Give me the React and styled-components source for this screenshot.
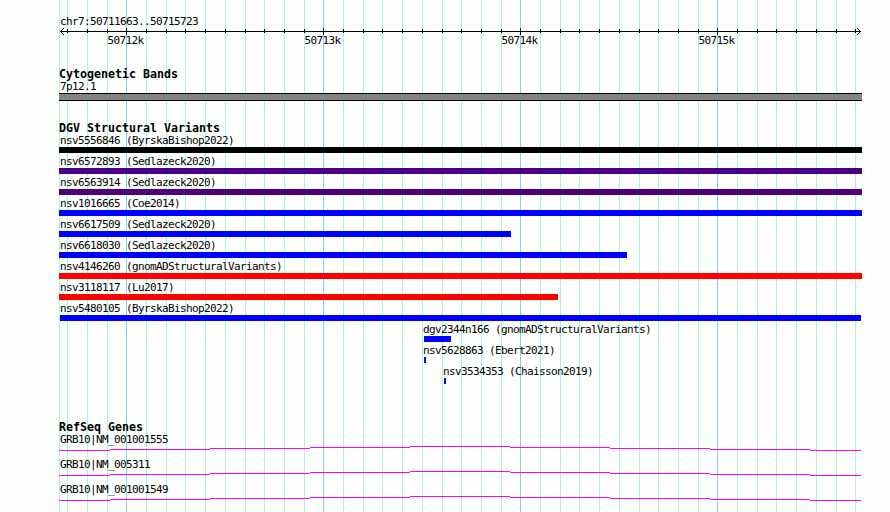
import React from "react";
import styled, { createGlobalStyle } from "styled-components";

const GlobalStyle = createGlobalStyle`
    body {
        margin: 0;
        background: #fdfffc;
        overflow: hidden;
    }
`;

const Browser = styled.div`
    display: grid;
    width: 890px;
    height: 512px;
    overflow: hidden;
    background: #fdfffc;
    color: #000;
    font-family: "DejaVu Sans Mono", "Liberation Mono", monospace;
`;

const GridLines = styled.svg`
    grid-area: 1 / 1;
    display: block;
`;

const Tracks = styled.main`
    grid-area: 1 / 1;
    display: flex;
    flex-direction: column;
    width: 803px;
    padding: 15px 0 0 59px;
`;

const Section = styled.section`
    display: flex;
    flex-direction: column;
    margin-top: ${(props) => props.$gap}px;
`;

const Title = styled.h2`
    margin: 0;
    height: 13px;
    line-height: 14px;
    font-size: 11.63px;
    font-weight: bold;
    white-space: pre;
`;

const Label = styled.div`
    height: 13px;
    line-height: 13px;
    padding-left: 1px;
    font-size: 11px;
    letter-spacing: -0.622px;
    white-space: pre;
`;

const Ruler = styled.svg`
    display: block;
    width: 803px;
    height: 19px;
    overflow: visible;
`;

const RulerText = styled.text`
    font-size: 11px;
    letter-spacing: -0.622px;
`;

const Band = styled.div`
    box-sizing: border-box;
    height: 8px;
    border: solid #000;
    border-width: 1px 0;
    background: #848284;
`;

const Variant = styled.div`
    height: 21px;
    margin-left: ${(props) => props.$offset}px;
`;

const Bar = styled.div`
    width: ${(props) => props.$width}px;
    height: 6px;
    margin-left: ${(props) => props.$start}px;
    background: ${(props) => props.$color};
`;

const Gene = styled.div`
    height: 25px;
`;

const Intron = styled.svg`
    display: block;
    width: 803px;
    height: 5px;
`;

const majorLines = [126, 323, 520, 717];

const minorLines = [
    59, 67, 87, 107, 146, 166, 185, 205, 225, 245, 264, 284, 304,
    343, 363, 382, 402, 422, 442, 461, 481, 501,
    540, 560, 579, 599, 619, 639, 658, 678, 698,
    737, 757, 776, 796, 816, 836, 855,
];

const rulerLabels = [
    { x: 48.6, text: "50712k" },
    { x: 245.6, text: "50713k" },
    { x: 442.6, text: "50714k" },
    { x: 639.6, text: "50715k" },
];

const variants = [
    { name: "nsv5556846 (ByrskaBishop2022)", width: 803, color: "#000" },
    { name: "nsv6572893 (Sedlazeck2020)", width: 803, color: "#4b0082" },
    { name: "nsv6563914 (Sedlazeck2020)", width: 803, color: "#4b0082" },
    { name: "nsv1016665 (Coe2014)", width: 803, color: "#00f" },
    { name: "nsv6617509 (Sedlazeck2020)", width: 452, color: "#00f" },
    { name: "nsv6618030 (Sedlazeck2020)", width: 568, color: "#00f" },
    { name: "nsv4146260 (gnomADStructuralVariants)", width: 803, color: "#f00" },
    { name: "nsv3118117 (Lu2017)", width: 499, color: "#f00" },
    { name: "nsv5480105 (ByrskaBishop2022)", start: 1, width: 801, color: "#00f" },
    { name: "dgv2344n166 (gnomADStructuralVariants)", offset: 363, start: 2, width: 27, color: "#00f" },
    { name: "nsv5628863 (Ebert2021)", offset: 363, start: 2, width: 2, color: "#00f" },
    { name: "nsv3534353 (Chaisson2019)", offset: 383, start: 2, width: 2, color: "#00f" },
];

const genes = ["GRB10|NM_001001555", "GRB10|NM_005311", "GRB10|NM_001001549"];

// x, width and y of each step of the intron line
const intronSteps = [
    [0, 51, 4],
    [51, 100, 3],
    [151, 100, 2],
    [251, 100, 1],
    [351, 100, 0],
    [451, 100, 1],
    [551, 100, 2],
    [651, 100, 3],
    [751, 51, 4],
];

const App = () => {
    return (
        <>
            <GlobalStyle />
            <Browser>
                <GridLines width="890" height="512" shapeRendering="crispEdges">
                    {minorLines.map((x) => (
                        <rect key={x} x={x} y="0" width="1" height="512" fill="#afeeee" />
                    ))}
                    {majorLines.map((x) => (
                        <rect key={x} x={x} y="0" width="1" height="512" fill="#87ceeb" />
                    ))}
                </GridLines>
                <Tracks>
                    <Label>chr7:50711663..50715723</Label>
                    <Ruler>
                        <g shapeRendering="crispEdges">
                            <rect x="1" y="3" width="801" height="1" />
                            {[1, 2, 3].map((step) => (
                                <React.Fragment key={step}>
                                    <rect x={1 + step} y={3 - step} width="1" height="1" />
                                    <rect x={1 + step} y={3 + step} width="1" height="1" />
                                    <rect x={801 - step} y={3 - step} width="1" height="1" />
                                    <rect x={801 - step} y={3 + step} width="1" height="1" />
                                </React.Fragment>
                            ))}
                            {minorLines.slice(1).map((x) => (
                                <rect key={x} x={x - 59} y="1" width="1" height="4" />
                            ))}
                            {majorLines.map((x) => (
                                <rect key={x} x={x - 59} y="0" width="1" height="7" />
                            ))}
                        </g>
                        {rulerLabels.map((label) => (
                            <RulerText key={label.text} x={label.x} y="16">{label.text}</RulerText>
                        ))}
                    </Ruler>
                    <Section $gap={20}>
                        <Title>Cytogenetic Bands</Title>
                        <Label>7p12.1</Label>
                        <Band />
                    </Section>
                    <Section $gap={20}>
                        <Title>DGV Structural Variants</Title>
                        {variants.map((variant) => (
                            <Variant key={variant.name} $offset={variant.offset || 0}>
                                <Label>{variant.name}</Label>
                                <Bar
                                    $start={variant.start || 0}
                                    $width={variant.width}
                                    $color={variant.color}
                                />
                            </Variant>
                        ))}
                    </Section>
                    <Section $gap={34}>
                        <Title>RefSeq Genes</Title>
                        {genes.map((gene) => (
                            <Gene key={gene}>
                                <Label>{gene}</Label>
                                <Intron shapeRendering="crispEdges">
                                    {intronSteps.map(([x, width, y]) => (
                                        <rect key={x} x={x} y={y} width={width} height="1" fill="#f0f" />
                                    ))}
                                </Intron>
                            </Gene>
                        ))}
                    </Section>
                </Tracks>
            </Browser>
        </>
    );
};

export default App;
